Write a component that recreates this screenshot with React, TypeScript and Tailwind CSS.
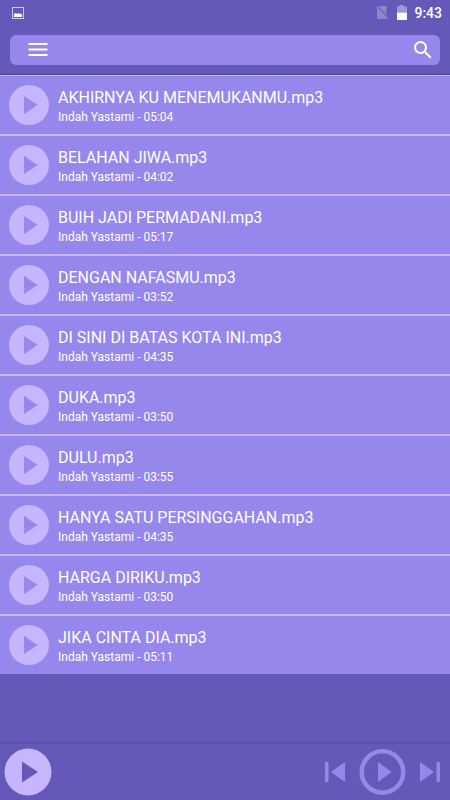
interface Song {
  title: string;
  artist: string;
  duration: string;
}

const artist = "Indah Yastami";

const songs: Song[] = [
  { title: "AKHIRNYA KU MENEMUKANMU.mp3", artist, duration: "05:04" },
  { title: "BELAHAN JIWA.mp3", artist, duration: "04:02" },
  { title: "BUIH JADI PERMADANI.mp3", artist, duration: "05:17" },
  { title: "DENGAN NAFASMU.mp3", artist, duration: "03:52" },
  { title: "DI SINI DI BATAS KOTA INI.mp3", artist, duration: "04:35" },
  { title: "DUKA.mp3", artist, duration: "03:50" },
  { title: "DULU.mp3", artist, duration: "03:55" },
  { title: "HANYA SATU PERSINGGAHAN.mp3", artist, duration: "04:35" },
  { title: "HARGA DIRIKU.mp3", artist, duration: "03:50" },
  { title: "JIKA CINTA DIA.mp3", artist, duration: "05:11" },
];

function StatusBar() {
  return (
    <div className="flex h-6 items-center justify-between px-2 pt-0.5">
      <svg className="ml-1 size-3" viewBox="0 0 12 12" aria-hidden="true">
        <rect x="0.5" y="0.5" width="11" height="11" fill="none" stroke="#cfcaea" />
        <path d="M2 10V7l1.5-1 1.500 1L6.500 6l1 1L9 6.500 10 8v2z" fill="#fff" />
      </svg>
      <div className="flex items-center">
        <svg className="mr-2 h-4 w-3" viewBox="0 0 12 16" aria-hidden="true">
          <path d="M3 1h7.500v13H1V3z" fill="#8d84cc" />
          <path d="M0 0.500L12 13" stroke="#6459b8" strokeWidth="1.5" />
          <path d="M0 1.500L12 14" stroke="#9d95d4" />
        </svg>
        <svg className="mr-1.5 h-4 w-3" viewBox="0 0 12 16" aria-hidden="true">
          <path d="M3.500 0h4v1.500H11v6H1v-6h2.500z" fill="#a097d6" />
          <path d="M1 7.500h10V15H1z" fill="#fff" />
        </svg>
        <span className="text-sm font-medium leading-4">9:43</span>
      </div>
    </div>
  );
}

function Toolbar() {
  return (
    <div className="mx-2.5 mt-2.75 flex h-7.5 items-center justify-between rounded-md bg-[#9687ec] pr-1.25 pl-4">
      <button type="button" aria-label="Menu">
        <svg className="size-6" viewBox="0 0 24 24" aria-hidden="true">
          <path d="M2.500 6h19M2.500 11.500h19M2.500 17h19" stroke="#fff" strokeWidth="2" />
        </svg>
      </button>
      <button type="button" aria-label="Search">
        <svg className="size-6" viewBox="0 0 24 24" fill="#fff" aria-hidden="true">
          <path d="M15.5 14h-.79l-.28-.27A6.47 6.47 0 0 0 16 9.5 6.5 6.5 0 1 0 9.5 16c1.61 0 3.09-.59 4.23-1.57l.27.28v.79l5 4.99L20.49 19l-4.99-5zm-6 0C7.01 14 5 11.99 5 9.5S7.01 5 9.5 5 14 7.01 14 9.5 11.99 14 9.5 14z" />
        </svg>
      </button>
    </div>
  );
}

function SongRow({ song }: { song: Song }) {
  return (
    <li className="flex h-15 items-center border-b-2 border-[#c7b5ff] pl-2 last:h-14.5 last:border-b-0">
      <button type="button" aria-label={`Play ${song.title}`} className="ml-px">
        <svg className="size-10" viewBox="0 0 40 40" aria-hidden="true">
          <circle cx="20" cy="20" r="20" fill="#c7b5ff" />
          <path d="M15 11v18l13.5-9z" fill="#9687ec" />
        </svg>
      </button>
      <div className="ml-2 min-w-0 flex-1 pt-1 pl-px">
        <p className="truncate text-base leading-5">{song.title}</p>
        <p className="truncate text-xs leading-4.5">
          {song.artist} - {song.duration}
        </p>
      </div>
    </li>
  );
}

function PlayerBar() {
  return (
    <footer className="sticky bottom-0 mt-auto flex h-14 items-center justify-between bg-[#6459b8] px-1 shadow-[0_-1px_3px_rgba(0,0,0,0.2)]">
      <button type="button" aria-label="Now playing">
        <svg className="size-12" viewBox="0 0 48 48" aria-hidden="true">
          <circle cx="24" cy="24" r="23.5" fill="#c7b5ff" />
          <path d="M18 13.5v21L34 24z" fill="#6459b8" />
        </svg>
      </button>
      <div className="flex items-center gap-3 pr-1">
        <button type="button" aria-label="Previous">
          <svg className="size-6" viewBox="0 0 24 24" fill="#9687ec" aria-hidden="true">
            <path d="M3 2h3.5v20H3zM23 2v20L9 12z" />
          </svg>
        </button>
        <button type="button" aria-label="Play">
          <svg className="size-12" viewBox="0 0 48 48" aria-hidden="true">
            <circle cx="24.5" cy="24" r="20.75" fill="none" stroke="#9687ec" strokeWidth="4.5" />
            <path d="M20 14v20l13.5-10z" fill="#9687ec" />
          </svg>
        </button>
        <button type="button" aria-label="Next">
          <svg className="size-6" viewBox="0 0 24 24" fill="#9687ec" aria-hidden="true">
            <path d="M2 2v20l14-10zM18.5 2H22v20h-3.5z" />
          </svg>
        </button>
      </div>
    </footer>
  );
}

export default function App() {
  return (
    <div className="flex min-h-screen flex-col bg-[#6459b8] font-[Roboto,sans-serif] text-white">
      <header className="pb-2.5">
        <StatusBar />
        <Toolbar />
      </header>
      <ul className="border-t border-[#c7b5ff] bg-[#9687ec] shadow-[0_-1px_1px_rgba(0,0,0,0.2)]">
        {songs.map((song) => (
          <SongRow key={song.title} song={song} />
        ))}
      </ul>
      <PlayerBar />
    </div>
  );
}
